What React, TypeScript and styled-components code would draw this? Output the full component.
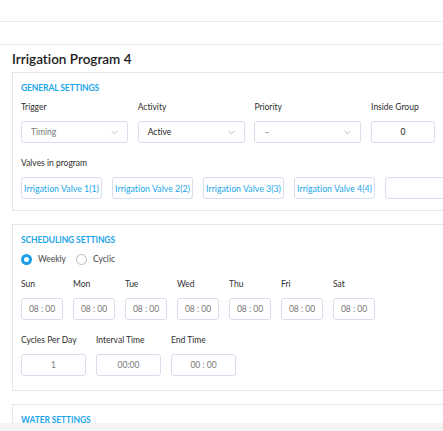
import React from "react";
import styled, { createGlobalStyle } from "styled-components";

const GlobalStyle = createGlobalStyle`
  html, body { margin: 0; padding: 0; background: #ffffff; overflow: hidden; }
  * { box-sizing: border-box; }
  body {
    font-family: Lato, "Open Sans", "Liberation Sans", sans-serif;
    color: #333;
    font-variant-ligatures: none;
  }
`;

const Page = styled.div`
  width: 443px;
  height: 431px;
  display: flex;
  flex-direction: column;
  overflow: hidden;
`;

const TopBar = styled.div`
  height: 22px;
  flex: none;
  border-bottom: 1px solid #ececec;
`;

const SubBar = styled.div`
  height: 23px;
  flex: none;
  border-bottom: 1px solid #ececec;
`;

const Main = styled.main`
  height: 378px;
  flex: none;
  overflow: hidden;
  padding: 6px 0 0 12px;
`;

const Footer = styled.div`
  flex: 1;
  background: #f3f3f3;
`;

const Title = styled.h1`
  margin: 0 0 4px;
  font-size: 13.5px;
  line-height: 17px;
  font-weight: 600;
  color: #1b1b1b;
  white-space: nowrap;
`;

const Card = styled.section<{ $pb: number }>`
  width: 560px;
  border: 1px solid #e6e6e6;
  border-right: none;
  padding: 9px 8px ${(p) => p.$pb}px;
  display: flex;
  flex-direction: column;
  margin-bottom: 13px;
`;

const SectionTitle = styled.h2`
  margin: 0;
  font-size: 8.5px;
  line-height: 12px;
  font-weight: 700;
  color: #1ca5ea;
  letter-spacing: -0.1px;
  text-transform: uppercase;
`;

const Row = styled.div<{ $mt: number; $cols: string; $gap: number }>`
  margin-top: ${(p) => p.$mt}px;
  display: grid;
  grid-template-columns: ${(p) => p.$cols};
  column-gap: ${(p) => p.$gap}px;
`;

const Field = styled.div`
  display: flex;
  flex-direction: column;
  gap: 8px;
`;

const Label = styled.span`
  font-size: 8.5px;
  line-height: 12px;
  color: #2e2e2e;
  white-space: nowrap;
`;

const Box = styled.div<{ $center?: boolean; $tone?: "muted" | "dark" | "link" }>`
  height: 22px;
  border: 1px solid #d8deee;
  border-radius: 3px;
  background: #fff;
  display: flex;
  align-items: center;
  justify-content: ${(p) => (p.$center ? "center" : "space-between")};
  padding: 0 ${(p) => (p.$center ? 0 : 9)}px;
  font-size: 8.5px;
  white-space: nowrap;
  color: ${(p) =>
    p.$tone === "dark" ? "#222" : p.$tone === "link" ? "#22a6ec" : "#777"};
`;

const Chips = styled.div`
  margin-top: 8px;
  display: flex;
  gap: 10px;
`;

const Chip = styled(Box)`
  width: 81px;
  flex: none;
  justify-content: center;
  padding: 0;
  font-size: 8.8px;
`;

const RadioRow = styled.div`
  margin-top: 7px;
  height: 12px;
  display: flex;
  align-items: center;
`;

const RadioDot = styled.span<{ $on: boolean }>`
  width: 11px;
  height: 11px;
  border-radius: 50%;
  border: ${(p) => (p.$on ? "3px solid #1a9fe8" : "1px solid #b9b9b9")};
  background: #fff;
  flex: none;
`;

const RadioText = styled.span`
  font-size: 8.5px;
  color: #444;
  margin: 0 10px 0 6px;
`;

const Chevron = () => (
  <svg width="7" height="5" viewBox="0 0 7 5" fill="none">
    <path d="M0.6 1 L3.5 3.8 L6.4 1" stroke="#a9a9a9" strokeWidth="0.8" />
  </svg>
);

const days = ["Sun", "Mon", "Tue", "Wed", "Thu", "Fri", "Sat"];
const valves = [
  "Irrigation Valve 1(1)",
  "Irrigation Valve 2(2)",
  "Irrigation Valve 3(3)",
  "Irrigation Valve 4(4)",
];

export default function App() {
  return (
    <Page>
      <GlobalStyle />
      <TopBar />
      <SubBar />
      <Main>
        <Title>Irrigation Program 4</Title>

        <Card $pb={11}>
          <SectionTitle>General Settings</SectionTitle>
          <Row $mt={7} $cols="107px 107px 107px 64px" $gap={9.7}>
            <Field>
              <Label>Trigger</Label>
              <Box $tone="muted">
                Timing <Chevron />
              </Box>
            </Field>
            <Field>
              <Label>Activity</Label>
              <Box $tone="dark">
                Active <Chevron />
              </Box>
            </Field>
            <Field>
              <Label>Priority</Label>
              <Box $tone="muted">
                – <Chevron />
              </Box>
            </Field>
            <Field>
              <Label>Inside Group</Label>
              <Box $center $tone="dark">0</Box>
            </Field>
          </Row>
          <Row $mt={14} $cols="1fr" $gap={0}>
            <Label>Valves in program</Label>
          </Row>
          <Chips>
            {valves.map((v) => (
              <Chip key={v} $tone="link">{v}</Chip>
            ))}
            <Chip $tone="link" />
          </Chips>
        </Card>

        <Card $pb={14}>
          <SectionTitle>Scheduling Settings</SectionTitle>
          <RadioRow>
            <RadioDot $on />
            <RadioText>Weekly</RadioText>
            <RadioDot $on={false} />
            <RadioText>Cyclic</RadioText>
          </RadioRow>
          <Row $mt={13} $cols="repeat(7, 42px)" $gap={10}>
            {days.map((d) => (
              <Field key={d}>
                <Label>{d}</Label>
                <Box $center>08 : 00</Box>
              </Field>
            ))}
          </Row>
          <Row $mt={14} $cols="repeat(3, 65px)" $gap={10}>
            <Field>
              <Label>Cycles Per Day</Label>
              <Box $center>1</Box>
            </Field>
            <Field>
              <Label>Interval Time</Label>
              <Box $center>00:00</Box>
            </Field>
            <Field>
              <Label>End Time</Label>
              <Box $center>00 : 00</Box>
            </Field>
          </Row>
        </Card>

        <Card $pb={11}>
          <SectionTitle>Water Settings</SectionTitle>
        </Card>
      </Main>
      <Footer />
    </Page>
  );
}
